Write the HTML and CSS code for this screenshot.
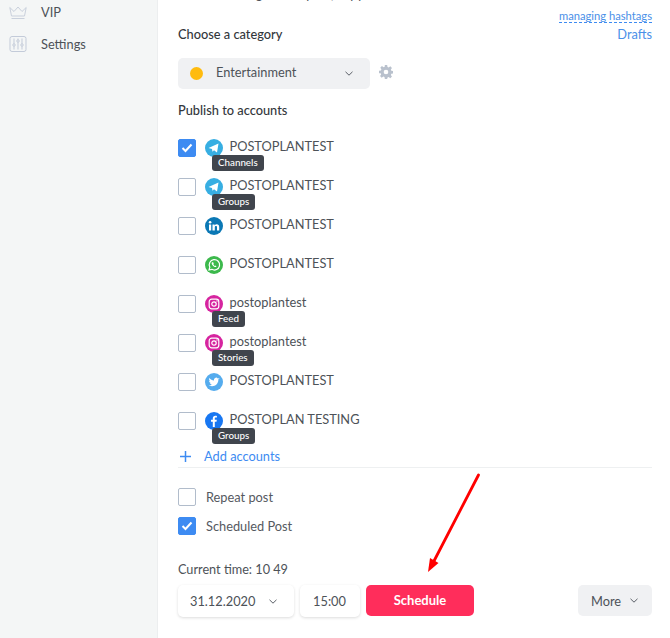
FILE: index.html
```html
<!DOCTYPE html>
<html lang="en">
<head>
<meta charset="utf-8">
<title>Schedule post</title>
<link rel="stylesheet" href="styles.css">
</head>
<body>
<div class="page">
  <aside class="sidebar">
    <a class="nav-item">
      <svg class="nav-icon" width="18" height="18" viewBox="0 0 18 18" fill="none" stroke="#c9d0dc" stroke-width="1"><path d="M.8 4.500 5 8.500 9 4l4 4.500 4.200-4-1.700 8.500h-13z"/><path d="M2.500 15.500h13"/></svg>
      <span>VIP</span>
    </a>
    <a class="nav-item">
      <svg class="nav-icon" width="18" height="18" viewBox="0 0 18 18" fill="none" stroke="#c3cbd9" stroke-width="1"><rect x="1" y="1.500" width="16" height="15" rx="2"/><path d="M5 3.500v11M9 3.500v11M13 3.500v11"/><circle cx="5" cy="10" r="1.200" fill="#f4f6f6"/><circle cx="9" cy="6" r="1.200" fill="#f4f6f6"/><circle cx="13" cy="10" r="1.200" fill="#f4f6f6"/></svg>
      <span>Settings</span>
    </a>
  </aside>
  <main class="content">
    <div class="top-row">
      <div class="top-left">
        <p class="clipped">Use tags in the post, copy</p>
        <h3 class="heading">Choose a category</h3>
      </div>
      <div class="top-links">
        <a class="hashtags">managing hashtags</a>
        <a class="drafts">Drafts</a>
      </div>
    </div>
    <div class="category-row">
      <div class="select">
        <span class="dot"></span>
        <span class="select-label">Entertainment</span>
        <svg class="chev" width="8" height="5" viewBox="0 0 8 5" fill="none" stroke="#5a5f66" stroke-width="1"><path d="M.5.8 4 4.200 7.500.8"/></svg>
      </div>
      <svg class="gear" width="14" height="14" viewBox="0 0 24 24" fill="#b9c1cd"><path fill-rule="evenodd" d="M10 0h4l.6 3.300 2 .8L19.400 2.200l2.800 2.800-1.900 2.800.8 2 3.300.6v4l-3.300.6-.8 2 1.900 2.800-2.800 2.800-2.800-1.900-2 .8L14 24h-4l-.6-3.300-2-.8-2.800 1.900-2.800-2.800 1.900-2.800-.8-2L0 14v-4l3.300-.6.8-2L2.200 4.600 5 1.800l2.800 1.900 2-.8zM12 8a4 4 0 1 0 0 8 4 4 0 0 0 0-8z"/></svg>
    </div>
    <h3 class="heading publish">Publish to accounts</h3>
    <ul class="accounts">
      <li class="account">
        <span class="box checked"><svg width="12" height="10" viewBox="0 0 12 10" fill="none" stroke="#fff" stroke-width="2"><path d="M1.500 5l3 3 6-6.500"/></svg></span>
        <svg class="soc" viewBox="0 0 18 18"><circle cx="9" cy="9" r="9" fill="#37aee2"/><path d="M3.500 9 13.500 4.500 12 13.500 9 11.300 7.500 12.800 7 10z" fill="#fff"/></svg>
        <span class="name">POSTOPLANTEST</span>
        <span class="tag">Channels</span>
      </li>
      <li class="account">
        <span class="box"></span>
        <svg class="soc" viewBox="0 0 18 18"><circle cx="9" cy="9" r="9" fill="#37aee2"/><path d="M3.500 9 13.500 4.500 12 13.500 9 11.300 7.500 12.800 7 10z" fill="#fff"/></svg>
        <span class="name">POSTOPLANTEST</span>
        <span class="tag">Groups</span>
      </li>
      <li class="account">
        <span class="box"></span>
        <svg class="soc" viewBox="0 0 18 18"><circle cx="9" cy="9" r="9" fill="#0b78b5"/><rect x="4" y="7.500" width="2.200" height="6" fill="#fff"/><circle cx="5.100" cy="5.200" r="1.300" fill="#fff"/><path d="M7.500 7.500h2.100v.9c.5-.7 1.200-1.100 2.100-1.100 1.700 0 2.500 1 2.500 2.800v3.400h-2.200v-3.100c0-.9-.3-1.300-1-1.300s-1.200.5-1.200 1.400v3H7.500z" fill="#fff"/></svg>
        <span class="name">POSTOPLANTEST</span>
      </li>
      <li class="account">
        <span class="box"></span>
        <svg class="soc" viewBox="0 0 18 18"><circle cx="9" cy="9" r="9" fill="#3cb94c"/><path d="M4 14l.8-2.800A5.200 5.200 0 1 1 6.800 13.300z" fill="none" stroke="#fff" stroke-width="1.200"/><path d="M7.200 6.300c-.6.400-.7 1.200-.2 2.100.6 1.100 1.500 2 2.700 2.500.8.300 1.500.1 1.800-.5l-1.200-.9-.6.500c-.6-.3-1.100-.8-1.400-1.400l.5-.6-.6-1.700z" fill="#fff"/></svg>
        <span class="name">POSTOPLANTEST</span>
      </li>
      <li class="account">
        <span class="box"></span>
        <svg class="soc" viewBox="0 0 18 18"><circle cx="9" cy="9" r="9" fill="#d6249f"/><rect x="4.200" y="4.200" width="9.600" height="9.600" rx="2.500" fill="none" stroke="#fff" stroke-width="1.200"/><circle cx="9" cy="9" r="2.200" fill="none" stroke="#fff" stroke-width="1.200"/><circle cx="12" cy="6" r=".7" fill="#fff"/></svg>
        <span class="name">postoplantest</span>
        <span class="tag">Feed</span>
      </li>
      <li class="account">
        <span class="box"></span>
        <svg class="soc" viewBox="0 0 18 18"><circle cx="9" cy="9" r="9" fill="#d6249f"/><rect x="4.200" y="4.200" width="9.600" height="9.600" rx="2.500" fill="none" stroke="#fff" stroke-width="1.200"/><circle cx="9" cy="9" r="2.200" fill="none" stroke="#fff" stroke-width="1.200"/><circle cx="12" cy="6" r=".7" fill="#fff"/></svg>
        <span class="name">postoplantest</span>
        <span class="tag">Stories</span>
      </li>
      <li class="account">
        <span class="box"></span>
        <svg class="soc" viewBox="0 0 18 18"><circle cx="9" cy="9" r="9" fill="#55acee"/><path d="M14.500 5.700c-.4.200-.8.300-1.300.4.500-.3.800-.7 1-1.200-.4.300-.9.400-1.400.5a2.200 2.200 0 0 0-3.800 2c-1.900-.1-3.500-1-4.600-2.400-.6 1-.3 2.300.7 3-.4 0-.7-.1-1-.3 0 1.100.7 2 1.800 2.200-.3.100-.7.100-1 0 .3.900 1.100 1.500 2.100 1.500a4.500 4.500 0 0 1-3.300.9c3.800 2.300 9.700.6 9.700-6 .5-.2.800-.6 1.100-1z" fill="#fff"/></svg>
        <span class="name">POSTOPLANTEST</span>
      </li>
      <li class="account">
        <span class="box"></span>
        <svg class="soc" viewBox="0 0 18 18"><circle cx="9" cy="9" r="9" fill="#1877f2"/><path d="M9.800 15V9.800h1.700l.3-2h-2V6.600c0-.6.200-1 1-1h1.100V3.900c-.3 0-.9-.1-1.500-.1-1.600 0-2.600 1-2.600 2.700v1.300H6v2h1.800V15z" fill="#fff"/></svg>
        <span class="name">POSTOPLAN TESTING</span>
        <span class="tag">Groups</span>
      </li>
    </ul>
    <a class="add">
      <svg class="plus" width="11" height="11" viewBox="0 0 11 11" stroke="#3d8bf2" stroke-width="1.500"><path d="M5.500 0v11M0 5.500h11"/></svg>
      <span>Add accounts</span>
    </a>
    <div class="options">
      <label class="option"><span class="box"></span><span>Repeat post</span></label>
      <label class="option"><span class="box checked"><svg width="12" height="10" viewBox="0 0 12 10" fill="none" stroke="#fff" stroke-width="2"><path d="M1.500 5l3 3 6-6.500"/></svg></span><span>Scheduled Post</span></label>
    </div>
    <p class="time">Current time: 10 49</p>
    <div class="actions">
      <div class="field date"><span>31.12.2020</span><svg width="8" height="5" viewBox="0 0 8 5" fill="none" stroke="#5a5f66" stroke-width="1"><path d="M.5.8 4 4.200 7.500.8"/></svg></div>
      <div class="field hour">15:00</div>
      <button class="schedule" type="button">Schedule</button>
      <button class="more" type="button"><span>More</span><svg width="8" height="5" viewBox="0 0 8 5" fill="none" stroke="#5a5f66" stroke-width="1"><path d="M.5.8 4 4.200 7.500.8"/></svg></button>
    </div>
  </main>
  <svg class="arrow" width="60" height="104" viewBox="0 0 60 104"><path d="M50.500 2 6 88" stroke="#f00" stroke-width="2.800" stroke-linecap="round" fill="none"/><path d="M0 99 2 85 10.500 90z" fill="#f00"/></svg>
</div>
</body>
</html>
```
FILE: styles.css
```css
* { box-sizing: border-box; }
html, body { margin: 0; padding: 0; }
body { font-family: Lato, "Liberation Sans", sans-serif; color: #3c4046; background: #fff; }
.page { position: relative; display: flex; width: 670px; height: 638px; overflow: hidden; }

.sidebar { flex: 0 0 158px; background: #f4f6f6; border-right: 1px solid #eceeef; }
.nav-item { display: flex; align-items: center; height: 22px; margin-bottom: 10px; padding-left: 9px; font-size: 12.800px; color: #4d5258; }
.nav-item:first-child { margin-top: 1px; }
.nav-icon { margin-right: 14px; }

.content { flex: 1; padding: 0 18px 0 20px; font-size: 12.800px; }
.top-row { display: flex; justify-content: space-between; }
.clipped { margin: -15px 0 0; height: 18px; line-height: 18px; font-size: 12.800px; padding-left: 42px; color: #4d5258; }
.heading { margin: 0; font-size: 12.800px; line-height: 18px; font-weight: 500; color: #33373c; }
.top-left .heading { margin-top: 22px; }
.top-links { display: flex; flex-direction: column; align-items: flex-end; padding-top: 9px; }
.hashtags { font-size: 11.200px; line-height: 13px; color: #4a90e8; border-bottom: 1px dashed #3d8bf2; }
.drafts { font-size: 12.800px; line-height: 18px; margin-top: 2px; color: #4a90e8; }

.category-row { display: flex; align-items: center; margin-top: 15px; }
.select { display: flex; align-items: center; width: 192px; height: 31px; padding: 0 17px 4px 12px; background: #f0f1f3; border-radius: 5px; }
.dot { width: 13px; height: 13px; margin-top: 4px; border-radius: 50%; background: #ffbb0e; margin-right: 13px; }
.select-label { flex: 1; color: #4d5258; }
.chev { margin-top: 3px; }
.gear { margin-left: 9px; margin-top: -3px; }
.publish { margin-top: 12px; }

.accounts { list-style: none; margin: 18px 0 0; padding: 0; }
.account { position: relative; display: flex; height: 39px; }
.box { flex: none; display: flex; align-items: center; justify-content: center; width: 18px; height: 18px; margin-top: 2px; border: 1px solid #b1bccb; border-radius: 2px; background: #fff; }
.box.checked { background: #3d8bf2; border-color: #3d8bf2; }
.soc { width: 18px; height: 18px; margin-left: 9px; margin-top: 2px; }
.name { margin-left: 6.500px; line-height: 18px; color: #4d5258; }
.tag { position: absolute; left: 34px; top: 18px; height: 16px; padding: 0 6px; line-height: 15px; font-size: 9.800px; font-weight: 500; color: #fff; background: #40454d; border-radius: 3px; }

.add { display: flex; align-items: center; height: 18px; margin-top: -2px; color: #3d8bf2; font-size: 12.800px; }
.plus { margin-left: 2px; margin-right: 13px; }

.options { margin-top: 2px; padding-top: 20px; border-top: 1px solid #eef0f1; }
.option { display: flex; align-items: center; gap: 10px; height: 18px; margin-bottom: 11px; font-size: 12.800px; color: #55595f; }
.option .box { margin-top: 0; }

.time { margin: 26px 0 0; font-size: 12.700px; line-height: 16px; color: #4d5258; }
.actions { display: flex; align-items: flex-start; margin-top: 8px; }
.field { display: flex; align-items: center; height: 32px; background: #fff; border-radius: 5px; box-shadow: 0 1px 3px rgba(0,0,0,.14); font-size: 12.800px; color: #4d5258; }
.date { width: 116px; padding-left: 12px; gap: 14px; }
.hour { width: 60px; margin-left: 6px; padding-right: 1px; justify-content: center; }
.schedule { width: 108px; height: 31px; margin-left: 6px; padding: 0 0 2px; border: 0; border-radius: 5px; background: #ff2d5b; color: #fff; font: 700 13px Lato, "Liberation Sans", sans-serif; }
.more { display: flex; align-items: center; gap: 9px; width: 74px; height: 31px; margin-left: auto; padding: 0 0 0 13px; border: 0; border-radius: 5px; background: #f0f1f3; color: #4d5258; font: 12.800px Lato, "Liberation Sans", sans-serif; }

.arrow { position: absolute; left: 428px; top: 473px; }
```
